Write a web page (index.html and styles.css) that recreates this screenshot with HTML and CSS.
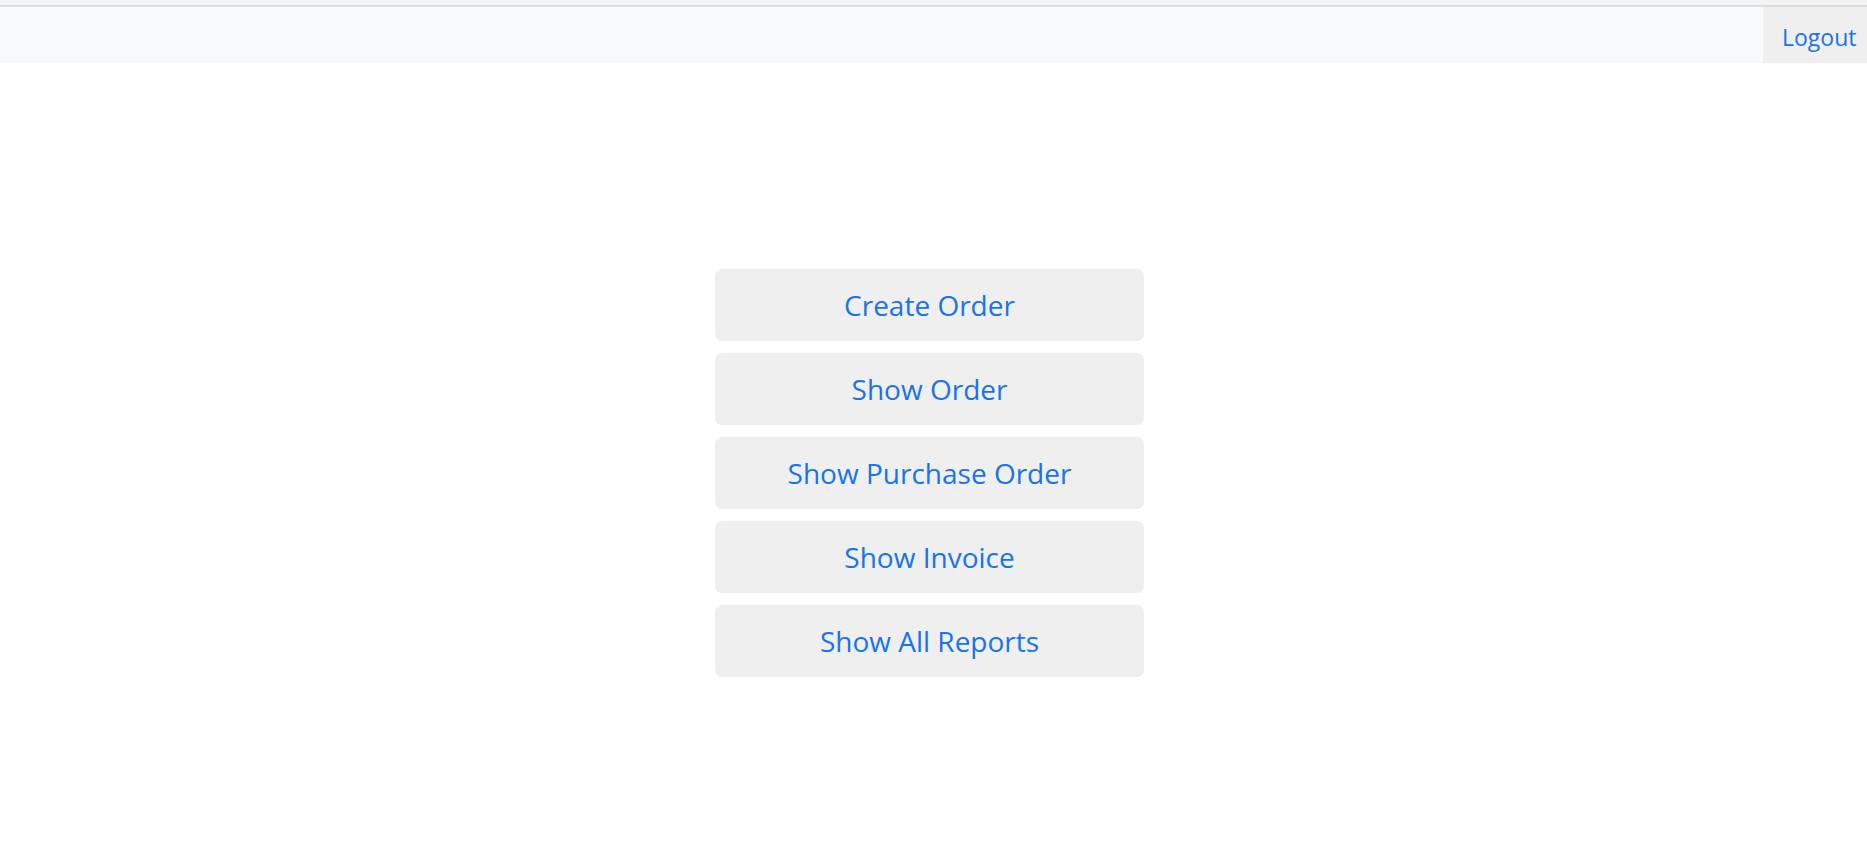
FILE: index.html
```html
<!DOCTYPE html>
<html>
<head>
<meta charset="utf-8">
<link rel="stylesheet" href="styles.css">
</head>
<body>
<div class="topstrip"></div>
<nav class="navbar">
  <a class="logout" href="#">Logout</a>
</nav>
<main class="menu">
  <a class="menu-btn" href="#">Create Order</a>
  <a class="menu-btn" href="#">Show Order</a>
  <a class="menu-btn" href="#">Show Purchase Order</a>
  <a class="menu-btn" href="#">Show Invoice</a>
  <a class="menu-btn" href="#">Show All Reports</a>
</main>
</body>
</html>
```

FILE: styles.css
```css
html, body {
  margin: 0;
  padding: 0;
  background: #ffffff;
  font-family: "Open Sans", "Noto Sans", sans-serif;
}
.topstrip {
  height: 5px;
  background: #f4f4f5;
  border-bottom: 2px solid #dcdde0;
}
.navbar {
  height: 56px;
  background: #f8f9fa;
  display: flex;
  justify-content: flex-end;
  align-items: stretch;
}
.logout {
  display: flex;
  align-items: center;
  width: 104px;
  box-sizing: border-box;
  padding: 4px 0 0 19px;
  background: #efefef;
  color: #1a73e8;
  text-decoration: none;
  font-size: 23px;
  white-space: nowrap;
  overflow: hidden;
}
.menu {
  display: flex;
  flex-direction: column;
  align-items: center;
  gap: 12px;
  padding-top: 206px;
  padding-right: 8px;
}
.menu-btn {
  width: 429px;
  height: 72px;
  display: flex;
  align-items: center;
  justify-content: center;
  background: #efefef;
  border-radius: 7px;
  color: #1a73e8;
  text-decoration: none;
  font-size: 28px;
}
```
